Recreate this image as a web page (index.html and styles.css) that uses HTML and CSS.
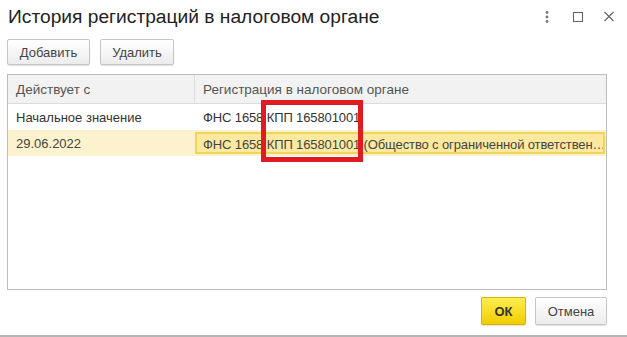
FILE: index.html
```html
<!DOCTYPE html>
<html lang="ru">
<head>
<meta charset="utf-8">
<link rel="stylesheet" href="styles.css">
</head>
<body>
<div class="dialog">
  <div class="titlebar">
    <h1 class="title">История регистраций в налоговом органе</h1>
    <div class="win-icons">
      <svg class="ico" width="12" height="14" viewBox="0 0 12 14"><circle cx="6" cy="2.5" r="1.4" fill="#777"/><circle cx="6" cy="7" r="1.4" fill="#777"/><circle cx="6" cy="11.5" r="1.4" fill="#777"/></svg>
      <svg class="ico" width="12" height="14" viewBox="0 0 12 14"><rect x="1.5" y="2.5" width="9" height="9" fill="none" stroke="#666" stroke-width="1.1"/></svg>
      <svg class="ico" width="12" height="14" viewBox="0 0 12 14"><path d="M1.5 2 L10.5 11 M10.5 2 L1.5 11" stroke="#666" stroke-width="1.2" fill="none"/></svg>
    </div>
  </div>
  <div class="toolbar">
    <button class="btn">Добавить</button>
    <button class="btn">Удалить</button>
  </div>
  <div class="table">
    <div class="row head">
      <div class="cell c1">Действует с</div>
      <div class="cell c2">Регистрация в налоговом органе</div>
    </div>
    <div class="row">
      <div class="cell c1">Начальное значение</div>
      <div class="cell c2 val">ФНС 1658 КПП 165801001</div>
    </div>
    <div class="row selected">
      <div class="cell c1">29.06.2022</div>
      <div class="cell c2 val"><span class="current">ФНС 1658 КПП 165801001 (Общество с ограниченной ответствен…</span></div>
    </div>
    <div class="highlight"></div>
  </div>
  <div class="footer">
    <button class="btn ok">ОК</button>
    <button class="btn">Отмена</button>
  </div>
</div>
</body>
</html>
```
FILE: styles.css
```css
html, body {
  margin: 0;
  padding: 0;
  background: #fff;
}
body {
  font-family: "Liberation Sans", Arial, sans-serif;
  color: #333;
  width: 627px;
  height: 337px;
  overflow: hidden;
}
.dialog {
  width: 627px;
  height: 335px;
  border-bottom: 2px solid #b5b5b5;
  display: flex;
  flex-direction: column;
}
.titlebar {
  height: 34px;
  display: flex;
  align-items: center;
  padding: 0 12px 0 8px;
}
.title {
  margin: 0;
  font-weight: normal;
  font-size: 19.2px;
  color: #222;
  flex: 1;
}
.win-icons {
  display: flex;
  gap: 19px;
  align-items: center;
}
.toolbar {
  display: flex;
  gap: 10px;
  padding: 5px 0 0 7px;
  height: 40px;
  box-sizing: border-box;
}
.btn {
  font-family: "Liberation Sans", Arial, sans-serif;
  font-size: 13px;
  color: #444;
  height: 26px;
  padding: 0 10px;
  border: 1px solid #c6c6c6;
  border-radius: 2px;
  background: linear-gradient(#ffffff, #ececec);
  box-shadow: 0 1px 1px rgba(0,0,0,0.12);
}
.toolbar .btn:first-child { width: 83px; }
.toolbar .btn:last-child { width: 74px; }
.table {
  position: relative;
  margin: 0 20px 0 7px;
  height: 216px;
  border: 1px solid #bdbdbd;
  box-sizing: border-box;
  font-size: 13px;
}
.row {
  display: flex;
  height: 26px;
  align-items: center;
}
.row.head {
  height: 28px;
  background: #f2f2f2;
  border-bottom: 1px solid #dcdcdc;
  color: #555;
  font-size: 13.5px;
}
.cell {
  box-sizing: border-box;
  padding: 0 8px;
  white-space: nowrap;
  overflow: hidden;
  height: 100%;
  display: flex;
  align-items: center;
}
.c1 { width: 187px; }
.c2 { flex: 1; min-width: 0; }
.val { letter-spacing: -0.12px; }
.row.head .c1 { border-right: 1px solid #dcdcdc; }
.row.selected {
  background: #fcf2cd;
  color: #444;
}
.row.selected .c2 {
  padding: 2px 1px 2px 0;
}
.current {
  display: block;
  width: 100%;
  height: 100%;
  box-sizing: border-box;
  border: 2px solid #f4d35c;
  background: #fbe9a0;
  padding: 2px 2px 0 6px;
  line-height: 18px;
  overflow: hidden;
  white-space: nowrap;
}
.highlight {
  position: absolute;
  left: 253px;
  top: 25px;
  width: 102px;
  height: 62px;
  box-sizing: border-box;
  border: 5px solid #e01b22;
}
.footer {
  display: flex;
  justify-content: flex-end;
  gap: 9px;
  padding: 7px 20px 0 0;
}
.footer .btn { height: 28px; }
.btn.ok {
  width: 45px;
  font-weight: bold;
  color: #333;
  border-color: #d8b400;
  background: linear-gradient(#ffee50, #f2cd00);
}
.footer .btn:last-child { width: 72px; }
```
